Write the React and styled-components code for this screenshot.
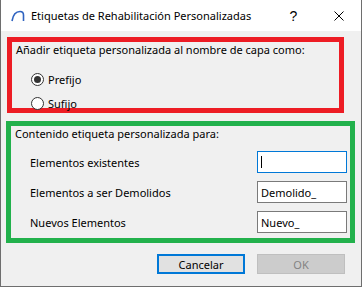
import React from "react";
import styled, { createGlobalStyle } from "styled-components";

const Global = createGlobalStyle`
  html, body { margin: 0; padding: 0; background: #f0f0f0; }
  body { font-family: "Noto Sans", "Liberation Sans", sans-serif; font-size: 11px; color: #000; }
  * { box-sizing: border-box; }
`;

const Window = styled.div`
  width: 362px;
  height: 287px;
  background: #f0f0f0;
  border: 1px solid #6e6e6e;
  border-top: none;
  display: flex;
  flex-direction: column;
`;

const TitleBar = styled.div`
  height: 31px;
  background: #fff;
  display: flex;
  align-items: center;
  padding-left: 10px;
  flex-shrink: 0;
`;

const Title = styled.span`
  margin-left: 6px;
  font-size: 11px;
  flex: 1;
  white-space: nowrap;
`;

const TitleButton = styled.span`
  width: 45px;
  display: flex;
  justify-content: center;
  align-items: center;
  font-size: 14px;
  font-family: "Liberation Sans", sans-serif;
  color: #000;
`;

const Box = styled.div`
  margin: ${(p) => p.$mt}px 0 0 ${(p) => p.$ml}px;
  width: ${(p) => p.$w}px;
  height: ${(p) => p.$h}px;
  border: 5px solid ${(p) => p.$color};
  padding: ${(p) => p.$pad};
  display: flex;
  flex-direction: column;
`;

const Heading = styled.div`
  line-height: 16px;
  white-space: nowrap;
`;

const RadioRow = styled.label`
  display: flex;
  align-items: center;
  height: 20px;
  padding-left: 15px;
  gap: 4px;
`;

const RadioCircle = styled.span`
  width: 13px;
  height: 13px;
  border-radius: 50%;
  border: 1px solid #333;
  background: #fff;
  display: flex;
  align-items: center;
  justify-content: center;
  &::after {
    content: "";
    width: 7px;
    height: 7px;
    border-radius: 50%;
    background: ${(p) => (p.$checked ? "#333" : "transparent")};
  }
`;

const RadioGroup = styled.div`
  margin-top: 11px;
  display: flex;
  flex-direction: column;
  gap: 4px;
`;

const FieldList = styled.div`
  margin-top: 9px;
  display: flex;
  flex-direction: column;
  gap: 8px;
`;

const FieldRow = styled.div`
  display: flex;
  align-items: center;
  justify-content: space-between;
  padding-left: 15px;
  height: 22px;
`;

const Input = styled.div`
  width: 90px;
  height: 22px;
  background: #fff;
  border: 1px solid ${(p) => (p.$focus ? "#0078d7" : "#7a7a7a")};
  display: flex;
  align-items: center;
  padding-left: 3px;
  color: #000;
`;

const Caret = styled.span`
  width: 1px;
  height: 12px;
  background: #000;
`;

const Footer = styled.div`
  display: flex;
  gap: 12px;
  padding-left: 156px;
  margin-top: 11px;
`;

const Button = styled.div`
  width: 88px;
  height: 20px;
  display: flex;
  align-items: center;
  justify-content: center;
  background: ${(p) => (p.$disabled ? "#cccccc" : "#e1e1e1")};
  border: ${(p) => (p.$default ? "2px solid #0078d7" : "1px solid #bfbfbf")};
  color: ${(p) => (p.$disabled ? "#838383" : "#000")};
`;

const AppIcon = () => (
  <svg width="14" height="12" viewBox="0 0 14 12">
    <path d="M1 11 C2 5 5 1.5 9 1.5 C11 1.5 12.5 3 12.5 5 L12.5 11" fill="none" stroke="#2f63c0" strokeWidth="1.6" />
  </svg>
);

const CloseIcon = () => (
  <svg width="10" height="10" viewBox="0 0 10 10">
    <path d="M0.5 0.5 L9.5 9.5 M9.5 0.5 L0.5 9.5" stroke="#000" strokeWidth="1" />
  </svg>
);

export default function App() {
  return (
    <>
      <Global />
      <Window>
        <TitleBar>
          <AppIcon />
          <Title>Etiquetas de Rehabilitación Personalizadas</Title>
          <TitleButton>?</TitleButton>
          <TitleButton><CloseIcon /></TitleButton>
        </TitleBar>
        <Box $color="#ed1c24" $mt={6} $ml={6} $w={337} $h={76} $pad="0 0 0 4px">
          <Heading>Añadir etiqueta personalizada al nombre de capa como:</Heading>
          <RadioGroup>
            <RadioRow><RadioCircle $checked />Prefijo</RadioRow>
            <RadioRow><RadioCircle />Sufijo</RadioRow>
          </RadioGroup>
        </Box>
        <Box $color="#22b14c" $mt={8} $ml={5} $w={349} $h={122} $pad="0 3px 0 4px">
          <Heading>Contenido etiqueta personalizada para:</Heading>
          <FieldList>
            <FieldRow>Elementos existentes<Input $focus><Caret /></Input></FieldRow>
            <FieldRow>Elementos a ser Demolidos<Input>Demolido_</Input></FieldRow>
            <FieldRow>Nuevos Elementos<Input>Nuevo_</Input></FieldRow>
          </FieldList>
        </Box>
        <Footer>
          <Button $default>Cancelar</Button>
          <Button $disabled>OK</Button>
        </Footer>
      </Window>
    </>
  );
}
